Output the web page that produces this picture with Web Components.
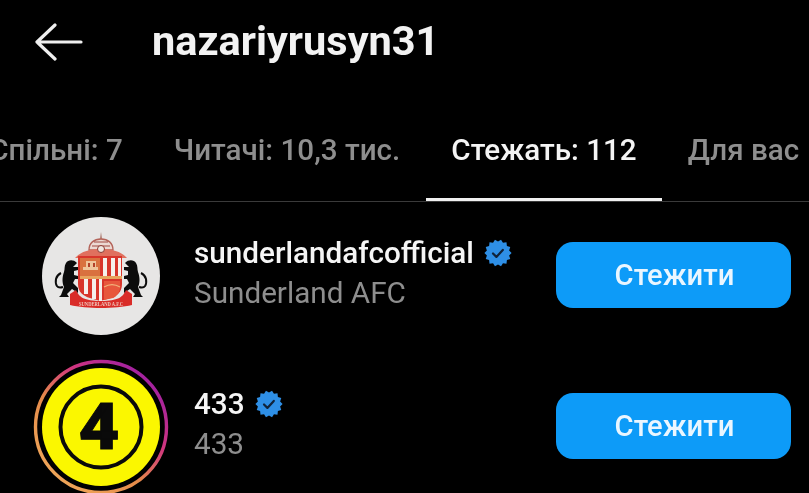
<!DOCTYPE html>
<html lang="uk">
<head>
<meta charset="utf-8">
<title>nazariyrusyn31</title>
<style>
    html, body { margin: 0; background: #000; }
    body { font-family: Roboto, "Liberation Sans", sans-serif; }
</style>
</head>
<body>
<x-app>
    <x-header>nazariyrusyn31</x-header>
    <x-tabs>
        <x-tab style="--w: 184px; --lead: -35px">Спільні: 7</x-tab>
        <x-tab style="--w: 278px">Читачі: 10,3 тис.</x-tab>
        <x-tab active style="--w: 236px">Стежать: 112</x-tab>
        <x-tab style="--w: 163px">Для вас</x-tab>
    </x-tabs>
    <x-row name="sunderlandafcofficial" sub="Sunderland AFC">
        <x-crest slot="avatar"></x-crest>
    </x-row>
    <x-row name="433" sub="433">
        <x-four slot="avatar"></x-four>
    </x-row>
</x-app>

<script>
class XApp extends HTMLElement {
    constructor() {
        super();
        const shadowRoot = this.attachShadow({ mode: 'open' });
        shadowRoot.innerHTML = `
            <style>
                :host {
                    display: flex;
                    flex-direction: column;
                    width: 809px;
                    height: 493px;
                    overflow: hidden;
                    background: #000;
                    filter: blur(.45px);
                }
            </style>
            <slot></slot>
        `;
    }
}

class XHeader extends HTMLElement {
    constructor() {
        super();
        const shadowRoot = this.attachShadow({ mode: 'open' });
        shadowRoot.innerHTML = `
            <style>
                :host {
                    display: flex;
                    align-items: center;
                    flex: none;
                    height: 84px;
                    padding-left: 35px;
                    color: #f2f2f2;
                    font-size: 41.5px;
                    font-weight: 700;
                }
                svg { width: 48px; height: 38px; margin-right: 69px; flex: none; }
                .title { margin-bottom: 4px; }
            </style>
            <svg viewBox="0 0 48 38" fill="none" stroke="#efefef" stroke-width="3.2" stroke-linecap="round" stroke-linejoin="round">
                <path d="M20 2 2 19l18 17M2 19h44"/>
            </svg>
            <div class="title"><slot></slot></div>
        `;
    }
}

class XTabs extends HTMLElement {
    constructor() {
        super();
        const shadowRoot = this.attachShadow({ mode: 'open' });
        shadowRoot.innerHTML = `
            <style>
                :host {
                    display: flex;
                    flex: none;
                    height: 118px;
                    margin: 0 0 -3px -1px;
                    border-bottom: 1px solid #3a3a3a;
                    box-sizing: border-box;
                }
            </style>
            <slot></slot>
        `;
    }
}

class XTab extends HTMLElement {
    constructor() {
        super();
        const shadowRoot = this.attachShadow({ mode: 'open' });
        shadowRoot.innerHTML = `
            <style>
                :host {
                    display: flex;
                    justify-content: center;
                    flex: none;
                    width: var(--w);
                    margin-left: var(--lead, 0);
                    box-sizing: border-box;
                    padding-top: 48px;
                    color: #8e8e8e;
                    font-size: 29.6px;
                    font-weight: 500;
                    line-height: 36px;
                    white-space: nowrap;
                }
                :host([active]) {
                    color: #f4f4f4;
                    border-bottom: 3px solid #f0f0f0;
                }
            </style>
            <slot></slot>
        `;
    }
}

class XRow extends HTMLElement {
    constructor() {
        super();
        const shadowRoot = this.attachShadow({ mode: 'open' });
        shadowRoot.innerHTML = `
            <style>
                :host {
                    display: grid;
                    grid-template-columns: 194px 1fr 235px;
                    align-items: center;
                    flex: none;
                    height: 151px;
                    padding-right: 18px;
                }
                .who { display: flex; flex-direction: column; gap: 2px; min-width: 0; padding-bottom: 4px; }
                .name {
                    display: flex;
                    align-items: center;
                    gap: 10px;
                    color: #f5f5f5;
                    font-size: 29.7px;
                    font-weight: 500;
                    line-height: 38px;
                }
                .sub { color: #8e8e8e; font-size: 29.7px; line-height: 38px; }
                button {
                    height: 66px;
                    border: 0;
                    padding: 0 0 0 2px;
                    border-radius: 17px;
                    background: #0d9bf8;
                    color: #eaf6ff;
                    font: 500 29.2px Roboto, "Liberation Sans", sans-serif;
                }
                .avatar { display: flex; height: 151px; }
            </style>
            <div class="avatar"><slot name="avatar"></slot></div>
            <div class="who">
                <div class="name"><span id="name"></span><x-verified></x-verified></div>
                <div class="sub" id="sub"></div>
            </div>
            <button>Стежити</button>
        `;
    }

    connectedCallback() {
        this.shadowRoot.getElementById("name").textContent = this.getAttribute("name");
        this.shadowRoot.getElementById("sub").textContent = this.getAttribute("sub");
    }
}

class XVerified extends HTMLElement {
    constructor() {
        super();
        const shadowRoot = this.attachShadow({ mode: 'open' });
        // scalloped edge, 14 bumps round the disc
        let points = [];
        for( let i = 0; i < 28; i++ ) {
            const r = i % 2 ? 11.4 : 13.6;
            const a = i / 28 * Math.PI * 2;
            points.push( (14 + r * Math.cos(a)).toFixed(2) + "," + (14 + r * Math.sin(a)).toFixed(2) );
        }
        shadowRoot.innerHTML = `
            <style>
                :host { display: block; width: 28px; height: 28px; flex: none; }
                svg { display: block; }
            </style>
            <svg width="28" height="28" viewBox="0 0 28 28">
                <polygon points="${ points.join(" ") }" fill="#2e8fe6"/>
                <path d="M9 14.5l3.4 3.4 6.4-7" fill="none" stroke="#10233a" stroke-width="2.2" stroke-linecap="round" stroke-linejoin="round"/>
            </svg>
        `;
    }
}

class XCrest extends HTMLElement {
    constructor() {
        super();
        const shadowRoot = this.attachShadow({ mode: 'open' });
        const lion = `
            <path d="M35 46C31 42 26 43 24 46c-2 3-1 6-2 9-2 5-2 11 0 15l-3 8-2 2h10l-2-3 5-5 6 4v-5l-5-5 2-4h3v-3l-4-1v-4l4-1v-3h-5z"/>
            <path d="M21 70c-6 2-8-2-7-8 1-4 3-5 5-6" fill="none" stroke="#0c0c0c" stroke-width="2"/>
        `;
        shadowRoot.innerHTML = `
            <style>
                :host { display: block; width: 118px; height: 118px; margin: 18px 0 0 42px; }
                svg { display: block; }
            </style>
            <svg width="118" height="118" viewBox="0 0 118 118">
                <circle cx="59" cy="59" r="59" fill="#e7e6e5"/>
                <!-- crown -->
                <path d="M59 15l1.4 8h-2.8z" fill="#b5897f"/>
                <path d="M47 33c0-7 5-11 12-11s12 4 12 11z" fill="#ecd9d3" stroke="#b4645a" stroke-width="1.4"/>
                <path d="M52 25h14M50 29h18" stroke="#a04a42" stroke-width="1.2"/>
                <path d="M33 41c6-7 16-9 26-9s20 2 26 9z" fill="#e0705e"/>
                <circle cx="59" cy="32" r="3.5" fill="#efe6e0" stroke="#8c3a32" stroke-width="1"/>
                <!-- lions -->
                <g fill="#0c0c0c">${ lion }</g>
                <g fill="#0c0c0c" transform="matrix(-1 0 0 1 118 0)">${ lion }</g>
                <!-- shield -->
                <path d="M36 39h44v28c0 8-5 12-11 14l-11 3-10-3c-7-2-12-6-12-14z" fill="#d8352b"/>
                <path d="M38 41h20v20H38z" fill="#d9713f"/>
                <path d="M41 50h15v3H41zM44 44h10v6H44z" fill="#efc59c"/>
                <path d="M46 46h2v4h-2zM51 46h2v4h-2z" fill="#b2412a"/>
                <path d="M38 59h42v3H38z" fill="#e7a35c"/>
                <path d="M61 41h4v18h-4zM69 41h4v18h-4zM76 41h3v18h-3z" fill="#f5f0ec"/>
                <path d="M42 62h4v15h-4zM50 62h4v20h-4zM57 62h3v22h-3z" fill="#f5f0ec"/>
                <path d="M62 64h16v6c0 5-3 9-7 11l-9 2z" fill="#e7573c"/>
                <path d="M62 70c5-3 11-3 16 0" fill="none" stroke="#f1b27a" stroke-width="1.3"/>
                <!-- ribbon -->
                <path d="M28 77l6-4c3 7 8 11 25 11s22-4 25-11l6 4v11c-8 2-20 3-31 3s-23-1-31-3z" fill="#d92c28"/>
                <text x="59" y="89" text-anchor="middle" font-family="Liberation Serif, serif" font-size="7" font-weight="700" fill="#f0c9bd" textLength="44" lengthAdjust="spacingAndGlyphs">SUNDERLAND A.F.C</text>
            </svg>
        `;
    }
}

class XFour extends HTMLElement {
    constructor() {
        super();
        const shadowRoot = this.attachShadow({ mode: 'open' });
        shadowRoot.innerHTML = `
            <style>
                :host { display: block; width: 136px; height: 136px; margin: 9px 0 0 33px; }
                svg { display: block; }
            </style>
            <svg width="136" height="136" viewBox="0 0 136 136">
                <defs>
                    <linearGradient id="ring" x1=".2" y1="1" x2=".95" y2=".15">
                        <stop offset="0" stop-color="#f0a85a"/>
                        <stop offset=".4" stop-color="#e58a4a"/>
                        <stop offset=".68" stop-color="#d0357f"/>
                        <stop offset="1" stop-color="#9c1fa5"/>
                    </linearGradient>
                </defs>
                <circle cx="68" cy="68" r="65.5" fill="none" stroke="url(#ring)" stroke-width="3.4"/>
                <circle cx="68" cy="68" r="59" fill="#fbf700"/>
                <circle cx="68" cy="68" r="40.5" fill="none" stroke="#0a0a0a" stroke-width="4"/>
                <text x="66" y="90" text-anchor="middle" font-family="Roboto, Liberation Sans, sans-serif" font-size="64" font-weight="900" fill="#0a0a0a" stroke="#0a0a0a" stroke-width=".8" textLength="41" lengthAdjust="spacingAndGlyphs">4</text>
            </svg>
        `;
    }
}

customElements.define("x-app", XApp);
customElements.define("x-header", XHeader);
customElements.define("x-tabs", XTabs);
customElements.define("x-tab", XTab);
customElements.define("x-row", XRow);
customElements.define("x-verified", XVerified);
customElements.define("x-crest", XCrest);
customElements.define("x-four", XFour);
</script>
</body>
</html>
